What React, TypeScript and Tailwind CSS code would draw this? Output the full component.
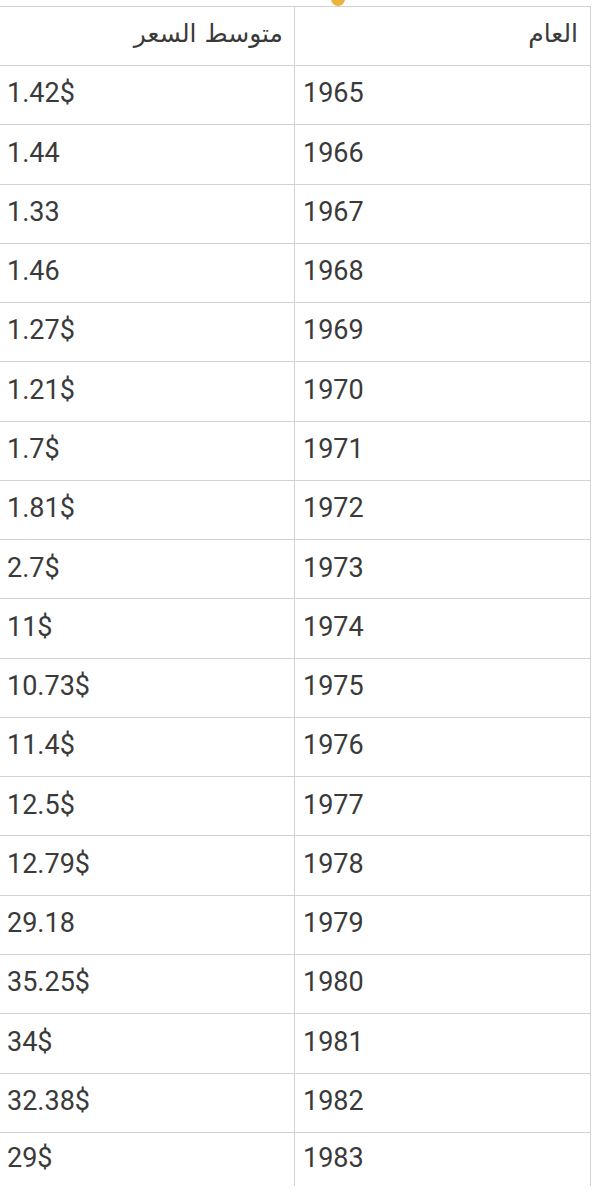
import React from "react";

const rows: [string, string][] = [
    ["1.42$", "1965"],
    ["1.44", "1966"],
    ["1.33", "1967"],
    ["1.46", "1968"],
    ["1.27$", "1969"],
    ["1.21$", "1970"],
    ["1.7$", "1971"],
    ["1.81$", "1972"],
    ["2.7$", "1973"],
    ["11$", "1974"],
    ["10.73$", "1975"],
    ["11.4$", "1976"],
    ["12.5$", "1977"],
    ["12.79$", "1978"],
    ["29.18", "1979"],
    ["35.25$", "1980"],
    ["34$", "1981"],
    ["32.38$", "1982"],
    ["29$", "1983"],
];

export default function App() {
    return (
        <div className="relative w-[612px] h-[1200px] bg-white overflow-hidden text-[#3a3a3a]">
            {/* yellow dot peeking in at the top */}
            <div className="absolute left-[331px] top-[-8px] w-[14px] h-[14px] rounded-full bg-[#e9b43c]" />

            <div className="pt-[6px] w-[591px]">
                {/* header */}
                <div className="grid grid-cols-[295px_296px] h-[60px] border-y border-[#d2d2d2]">
                    <div
                        dir="rtl"
                        className="flex items-center pr-[11px] pb-[4px] border-r border-[#d2d2d2] text-[25px] font-['DejaVu_Sans',sans-serif]"
                    >
                        متوسط السعر
                    </div>
                    <div
                        dir="rtl"
                        className="flex items-center pr-[12px] pb-[4px] border-r border-[#d2d2d2] text-[25px] font-['DejaVu_Sans',sans-serif]"
                    >
                        العام
                    </div>
                </div>

                {rows.map(([price, year], i) => (
                    <div
                        key={year}
                        className={`grid grid-cols-[295px_296px] ${
                            i === rows.length - 1 ? "h-[53px]" : "h-[59.28px] border-b border-[#d2d2d2]"
                        }`}
                    >
                        <div className="flex items-center pl-[7px] pb-[3px] border-r border-[#d2d2d2] text-[27px] font-['Roboto',sans-serif]">
                            {price}
                        </div>
                        <div className="flex items-center pl-[8px] pb-[3px] border-r border-[#d2d2d2] text-[27px] font-['Roboto',sans-serif]">
                            {year}
                        </div>
                    </div>
                ))}
            </div>
        </div>
    );
}
